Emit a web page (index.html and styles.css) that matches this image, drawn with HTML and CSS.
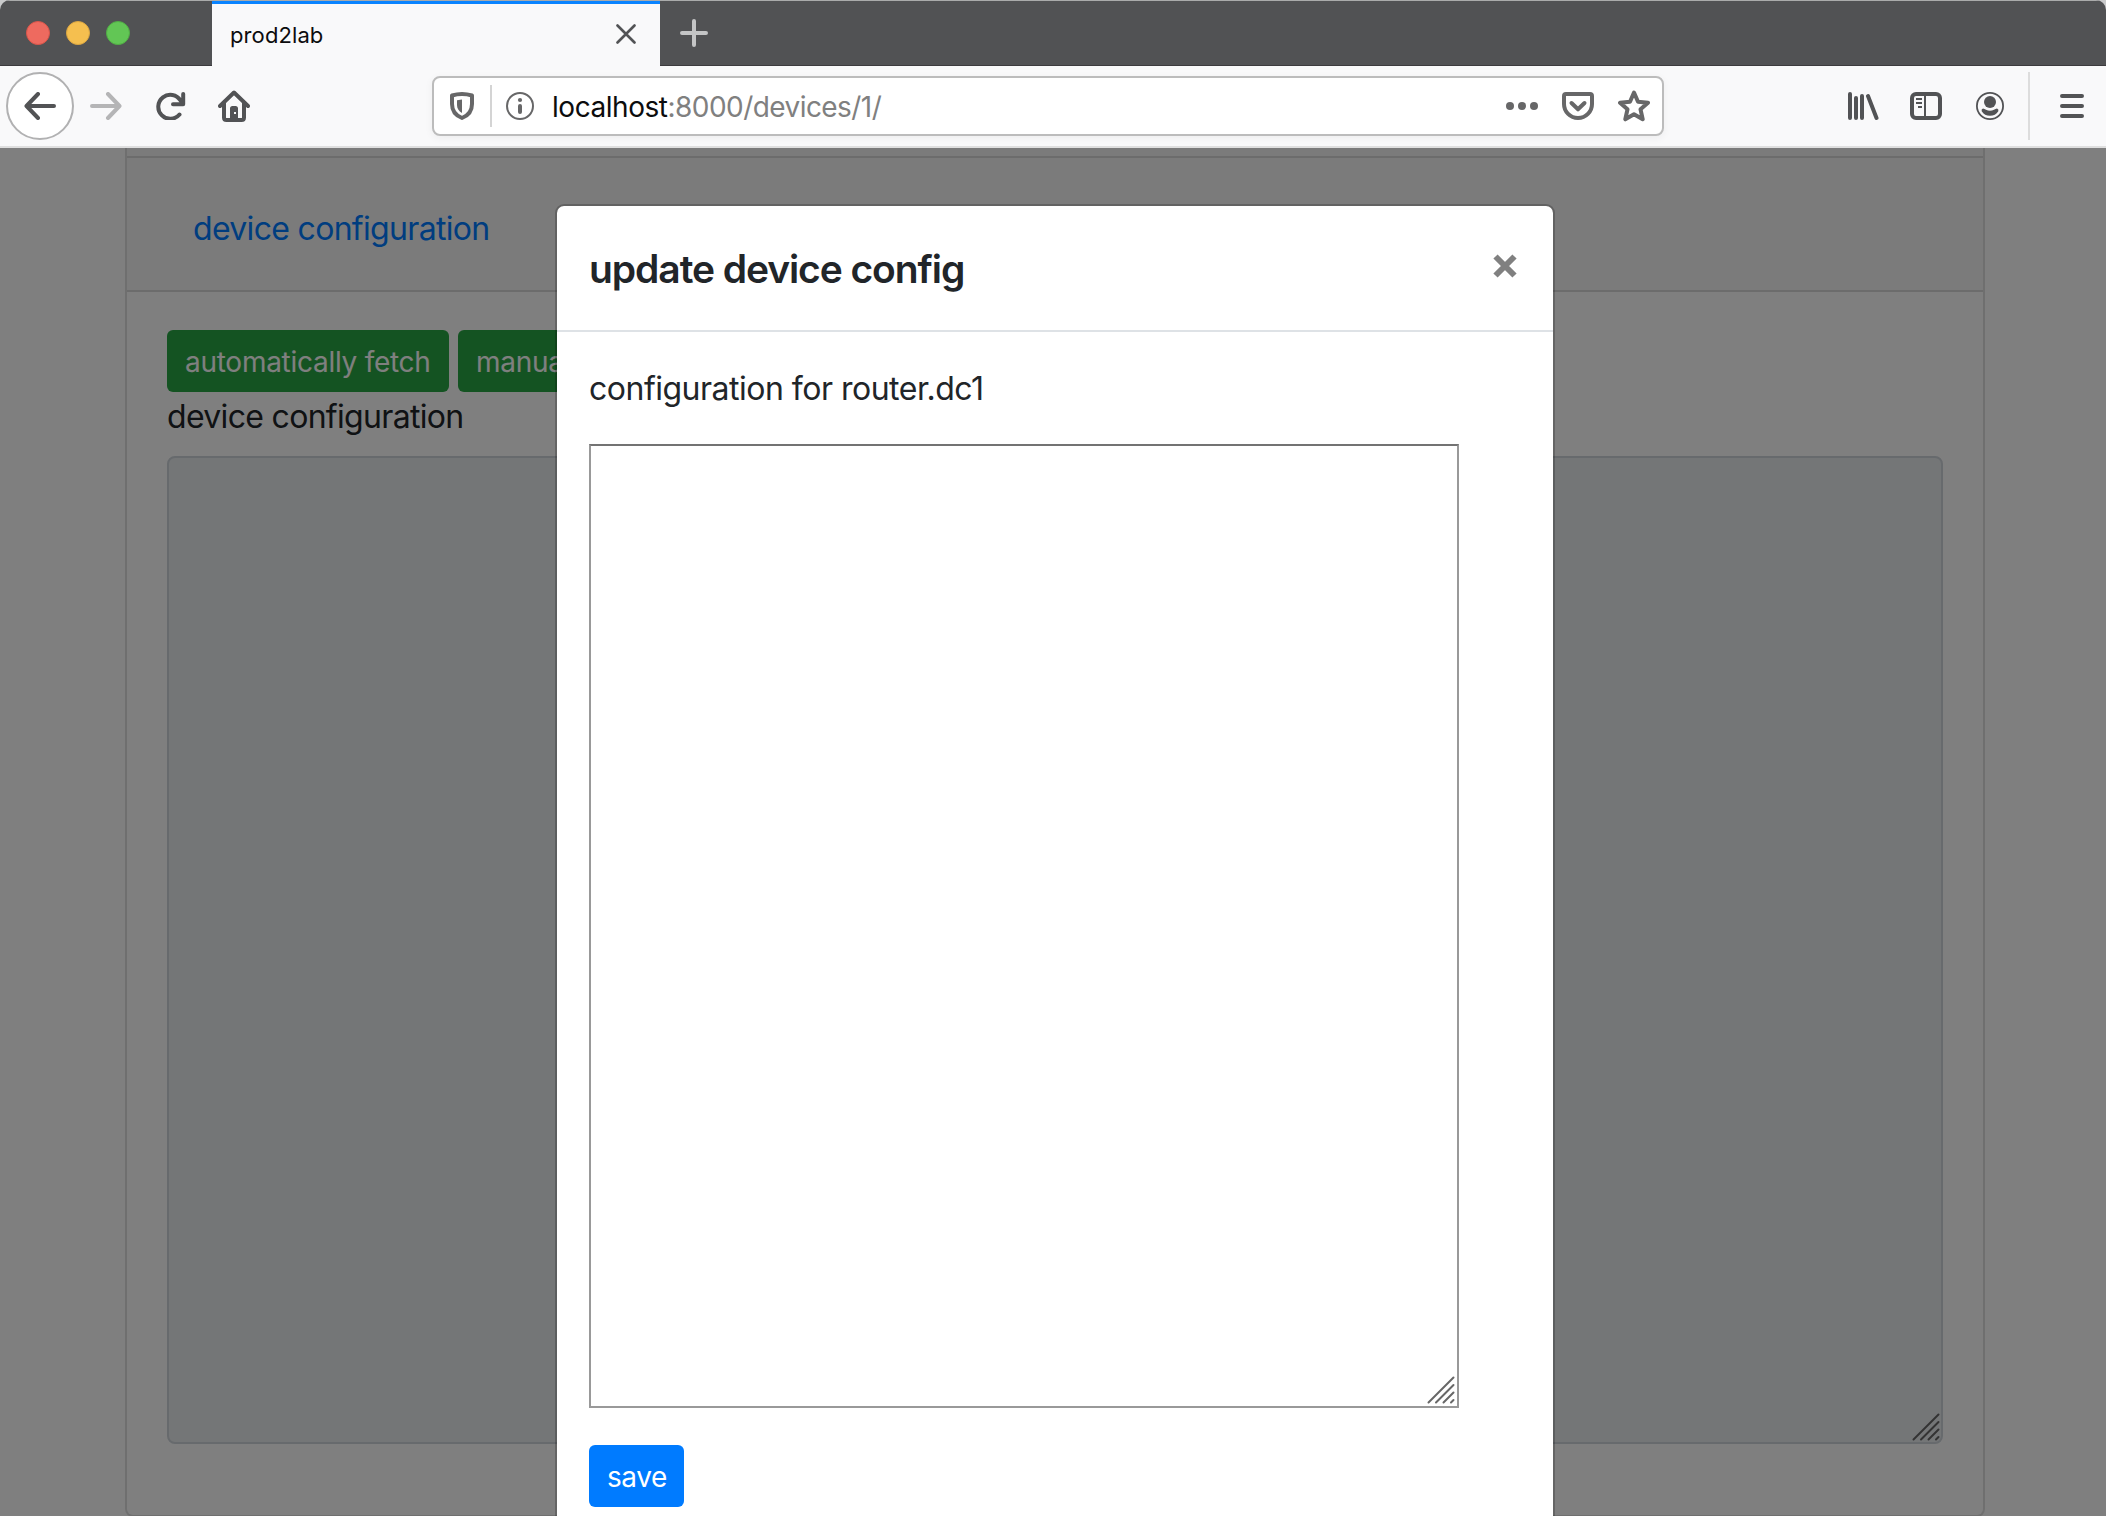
FILE: index.html
```html
<!DOCTYPE html>
<html lang="en">
<head>
<meta charset="utf-8">
<title>prod2lab</title>
<link rel="stylesheet" href="styles.css">
</head>
<body>
<div class="window">
  <header class="tabbar">
    <div class="lights"><span class="light red"></span><span class="light yellow"></span><span class="light green"></span></div>
    <div class="tab"><span class="tab-title">prod2lab</span>
      <svg class="tab-close" width="20" height="20" viewBox="0 0 20 20"><path d="M1.5 1.5l17 17M18.500 1.500l-17 17"/></svg>
    </div>
    <svg class="tab-new" width="28" height="28" viewBox="0 0 28 28"><path d="M14 2v24M2 14h24"/></svg>
  </header>
  <nav class="toolbar">
    <div class="nav-buttons">
      <span class="back"><svg width="32" height="28" viewBox="0 0 32 28"><path d="M30 14H3M14 2L2.500 14L14 26"/></svg></span>
      <svg class="icon forward" width="32" height="28" viewBox="0 0 32 28"><path d="M2 14h27M18 2l11.500 12L18 26"/></svg>
      <svg class="icon reload" width="32" height="28" viewBox="0 0 32 28"><path d="M24.500 22.500A12 12 0 1 1 25.500 8.500M28.200 2v10.200H18"/></svg>
      <svg class="icon home" width="32" height="32" viewBox="0 0 32 32"><path d="M2 16L16 2.500L30 16M6 13v14.500q0 2.500 2.500 2.500h15q2.500 0 2.500-2.500V13"/><path class="solid" fill-rule="evenodd" d="M12 31V18.500q0-2.500 2.500-2.500h3q2.500 0 2.500 2.500V31zM16 22v2h2v-2z"/></svg>
    </div>
    <div class="urlbar">
      <svg class="shield" width="26" height="28" viewBox="0 0 26 28"><path d="M13 2C9 2 6 2.600 3 3.500V12c0 7 3.500 11.500 10 14c6.500-2.500 10-7 10-14V3.500C20 2.600 17 2 13 2z"/><path class="solid" d="M13 7.500L8 8.300V13c0 3.500 1.700 6 5 8z"/></svg>
      <span class="divider"></span>
      <svg class="info" width="28" height="28" viewBox="0 0 28 28"><circle cx="14" cy="14" r="13"/><circle class="solid" cx="14" cy="8" r="2.100"/><path class="stem" d="M14 14v6"/></svg>
      <span class="url"><b>localhost</b>:8000/devices/1/</span>
      <svg class="dots" width="32" height="8" viewBox="0 0 32 8"><circle cx="4" cy="4" r="4"/><circle cx="16" cy="4" r="4"/><circle cx="28" cy="4" r="4"/></svg>
      <svg class="pocket" width="32" height="28" viewBox="0 0 32 28"><path d="M4 2h24q2 0 2 2v8a14 14 0 0 1-28 0V4q0-2 2-2z"/><path d="M9.500 11L16 17.300L22.500 11"/></svg>
      <svg class="star" width="32" height="32" viewBox="0 0 32 32"><path d="M16 2.500l4 9.200 10 1-7.500 6.600 2.200 10L16 24.200l-8.700 5.100 2.200-10L2 12.700l10-1z"/></svg>
    </div>
    <div class="tools">
      <svg class="library" width="31" height="28" viewBox="0 0 31 28"><path d="M2 2v24M8 6v20M14 4v22M20 4l8.500 22"/></svg>
      <svg class="sidebar" width="32" height="28" viewBox="0 0 32 28"><rect x="2" y="2" width="28" height="24" rx="4"/><path class="thin" d="M15 3v22M6 7h6M6 11h6M8 15h4"/></svg>
      <svg class="account" width="28" height="28" viewBox="0 0 28 28"><circle class="ring" cx="14" cy="14" r="13.100"/><circle cx="14" cy="10" r="6"/><path d="M7 16.500Q5 17 5.700 19.300Q8.500 23.800 14 23.800T22.300 19.300Q23 17 21 16.500Q19.500 16.700 18 17.700Q14 19.700 10 17.700Q8.500 16.700 7 16.500z"/></svg>
      <span class="tool-divider"></span>
      <svg class="menu" width="24" height="24" viewBox="0 0 24 24"><path d="M2 2h20M2 12h20M2 22h20"/></svg>
    </div>
  </nav>
  <main class="viewport">
    <section class="card">
      <div class="card-prev"></div>
      <div class="card-header"><a class="card-link">device configuration</a></div>
      <div class="card-body">
        <div class="buttons"><span class="btn success">automatically fetch</span><span class="btn success">manual</span></div>
        <div class="label">device configuration</div>
        <div class="config-area"><svg class="grip" width="28" height="28" viewBox="0 0 28 28"><path d="M1.500 26.500l25-25M9 26.500L26.500 9M16.500 26.500l10-10M24 26.500l2.500-2.500"/></svg></div>
      </div>
    </section>
    <div class="backdrop">
      <div class="modal">
        <div class="modal-header"><h5 class="modal-title">update device config</h5>
          <svg class="close" width="24" height="24" viewBox="0 0 24 24"><path d="M2.500 2.500l19 19M21.500 2.500l-19 19"/></svg>
        </div>
        <div class="modal-body">
          <p class="modal-text">configuration for router.dc1</p>
          <div class="edit-area"><svg class="grip" width="28" height="28" viewBox="0 0 28 28"><path d="M1.500 26.500l25-25M9 26.500L26.500 9M16.500 26.500l10-10M24 26.500l2.500-2.500"/></svg></div>
          <span class="btn primary">save</span>
        </div>
      </div>
    </div>
  </main>
</div>
</body>
</html>
```
FILE: styles.css
```css
* { box-sizing: border-box; }
body { margin: 0; background: #c9cacb; font-family: Inter, "Liberation Sans", sans-serif; }
svg { display: block; flex: none; fill: none; stroke: #525355; stroke-width: 4; stroke-linecap: round; stroke-linejoin: round; }
.window { width: 2106px; height: 1516px; overflow: hidden; display: flex; flex-direction: column; border-radius: 10px 10px 0 0; }

.tabbar { height: 66px; flex: none; display: flex; align-items: stretch; background: #515254; border-top: 1px solid #aaabab; border-bottom: 1px solid #3c3b3e; }
.lights { width: 212px; display: flex; gap: 16px; padding: 20px 0 0 26px; }
.light { width: 24px; height: 24px; border-radius: 50%; }
.red { background: #ee6a5f; border: 1px solid #d9554a; }
.yellow { background: #f5bf4f; border: 1px solid #dba641; }
.green { background: #62c655; border: 1px solid #50ae44; }
.tab { width: 448px; height: 65px; display: flex; align-items: center; justify-content: space-between; padding: 0 24px 2px 18px; background: #f9f9fa; border-top: 3px solid #0a84ff; }
.tab-title { padding-top: 2px; font-size: 22px; color: #0c0c0d; line-height: 30px; letter-spacing: 0.1px; }
.tab-close { stroke-width: 2.6; }
.tab-new { margin: 18px 0 0 20px; stroke: #c4c5c6; }

.toolbar { height: 82px; flex: none; display: flex; align-items: center; background: #f9f9fa; border-bottom: 2px solid #dfdfdf; }
.nav-buttons { width: 432px; display: flex; align-items: center; padding-left: 6px; }
.back { width: 68px; height: 68px; display: flex; align-items: center; justify-content: center; border: 2px solid #b1b1b2; border-radius: 50%; background: #fff; }
.forward { margin-left: 16px; stroke: #b5b5b6; }
.reload { margin-left: 33px; }
.home { margin-left: 31px; }
.home .solid { stroke: none; fill: #525355; }
.urlbar { width: 1232px; height: 60px; display: flex; align-items: center; padding-left: 15px; border: 2px solid #bcbcbc; border-radius: 8px; background: #fff; box-shadow: 0 2px 8px rgba(0,0,0,.05); }
.urlbar svg { stroke: #676768; }
.urlbar .solid { stroke: none; fill: #676768; }
.divider { width: 2px; height: 42px; margin: 0 14px 0 15px; background: #d4d4d4; }
.info { stroke-width: 2; }
.info .stem { stroke-width: 4; }
.url { flex: 1; margin-left: 18px; padding-top: 2px; font-size: 28px; line-height: 40px; letter-spacing: -0.56px; color: #808080; white-space: nowrap; }
.url b { font-weight: 400; letter-spacing: -0.45px; color: #0c0c0d; }
.urlbar .dots { margin-right: 24px; fill: #676768; stroke: none; }
.pocket { margin-right: 24px; }
.star { margin-right: 12px; }
.tools { flex: 1; display: flex; align-items: center; padding-left: 184px; }
.sidebar { margin-left: 31px; }
.sidebar .thin { stroke-width: 2; stroke-linecap: butt; }
.account { margin-left: 34px; fill: #525355; stroke: none; }
.account .ring { fill: none; stroke: #525355; stroke-width: 1.8; }
.tool-divider { width: 2px; height: 68px; margin: 0 30px 0 24px; background: #dddddd; }

.viewport { position: relative; flex: 1; overflow: hidden; background: #fff; font-size: 32px; line-height: 48px; color: #212529; }
.card { width: 1860px; height: 1369px; margin-left: 125px; display: flex; flex-direction: column; border: 2px solid rgba(0,0,0,.125); border-top: 0; border-radius: 0 0 8px 8px; }
.card-prev { height: 10px; flex: none; background: rgba(0,0,0,.03); border-bottom: 2px solid rgba(0,0,0,.125); }
.card-header { height: 134px; flex: none; padding: 47px 66px 0; background: rgba(0,0,0,.03); border-bottom: 2px solid rgba(0,0,0,.125); }
.card-link { letter-spacing: -0.68px; color: #007bff; }
.card-body { padding: 38px 40px 0; display: flex; flex-direction: column; }
.buttons { display: flex; gap: 9px; }
.btn { height: 62px; display: inline-flex; align-items: center; padding: 2px 0 0 18px; font-size: 28px; line-height: 42px; letter-spacing: -0.27px; color: #fff; border-radius: 6px; white-space: nowrap; }
.success { width: 282px; background: #28a745; }
.primary { width: 95px; letter-spacing: -0.45px; background: #007bff; }
.label { height: 64px; padding-top: 1px; letter-spacing: -0.68px; white-space: nowrap; }
.config-area { height: 988px; display: flex; align-items: flex-end; justify-content: flex-end; padding: 1px; border: 2px solid #ced4da; border-radius: 8px; background: #e9ecef; }
.grip { stroke: #676767; stroke-width: 2; }

.backdrop { position: absolute; inset: 0; padding: 56px 0 0 555px; background: rgba(0,0,0,.5); }
.modal { width: 1000px; height: 1400px; border: 2px solid rgba(0,0,0,.2); border-radius: 9px; background: #fff; background-clip: padding-box; }
.modal-header { height: 126px; display: flex; align-items: flex-start; justify-content: space-between; padding: 32px 36px 0 32px; border-bottom: 2px solid #dee2e6; }
.modal-title { margin: 0; padding-top: 1px; font-size: 39px; line-height: 60px; font-weight: 600; letter-spacing: -1.08px; }
.close { margin-top: 16px; stroke: #808080; stroke-width: 6; stroke-linecap: butt; }
.modal-body { display: flex; flex-direction: column; align-items: flex-start; padding: 32px; }
.modal-text { margin: 0; height: 80px; padding-top: 1px; letter-spacing: -0.5px; white-space: nowrap; }
.edit-area { width: 870px; height: 964px; margin-bottom: 37px; display: flex; align-items: flex-end; justify-content: flex-end; padding: 2px; border: 2px solid #999; border-top-color: #737373; }
```
